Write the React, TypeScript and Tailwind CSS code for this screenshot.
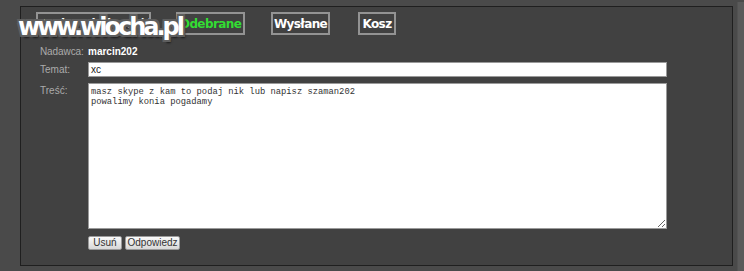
import React from "react";

const tabs = [
  { label: "Napisz wiadomość", w: "w-[115px]", active: false },
  { label: "Odebrane", w: "w-[69px]", active: true },
  { label: "Wysłane", w: "w-[59px]", active: false },
  { label: "Kosz", w: "w-[38px]", active: false },
];

export default function App() {
  return (
    <div className="relative flex h-[271px] w-[744px] overflow-hidden bg-[#4a4a4a] font-['Liberation_Sans',Arial,sans-serif]">
      {/* panel */}
      <div className="ml-[20px] mt-[6px] h-[260px] w-[713px] border border-[#1f1f1f] bg-[#414141]">
        {/* zakładki */}
        <div className="flex items-start pl-[15px] pt-[5px]">
          {tabs.map((t, i) => (
            <div
              key={t.label}
              className={`flex h-[23px] ${t.w} items-center justify-center overflow-hidden whitespace-nowrap border-2 border-[#939393] font-['DejaVu_Sans',Verdana,sans-serif] text-[12px] font-bold tracking-[-0.6px] ${
                t.active ? "text-[#33dd33]" : "text-white"
              } ${i === 0 ? "mr-[25px]" : i === 1 ? "mr-[26px]" : "mr-[28px]"}`}
            >
              {t.label}
            </div>
          ))}
        </div>

        {/* formularz */}
        <div className="mt-[10px] grid grid-cols-[48px_579px] pl-[19px] text-[10px]">
          <div className="h-[14px] leading-[14px] tracking-[-0.1px] text-[#ababab]">Nadawca:</div>
          <div className="h-[14px] leading-[14px] font-bold text-white">marcin202</div>

          <div className="mt-[3px] leading-[15px] text-[#ababab]">Temat:</div>
          <div className="mt-[3px] h-[15px] border border-[#9a9a9a] bg-white pl-[2px] text-[10px] leading-[13px] text-[#222]">xc</div>

          <div className="mt-[6px] pt-[1px] leading-[14px] text-[#ababab]">Treść:</div>
          <textarea
            readOnly
            defaultValue={"masz skype z kam to podaj nik lub napisz szaman202\npowalimy konia pogadamy"}
            className="mt-[6px] h-[146px] w-[579px] border border-[#9a9a9a] bg-white px-[2px] pt-[3px] font-['Liberation_Mono','Courier_New',monospace] text-[8.8px] leading-[10px] text-[#333] outline-none"
          />

          <div />
          <div className="mt-[7px] flex gap-[3px]">
            <button className="h-[14px] w-[34px] rounded-[2px] border border-[#9a9a9a] bg-gradient-to-b from-[#fafafa] to-[#d8d8d8] text-[10px] leading-[12px] text-[#333]">
              Usuń
            </button>
            <button className="h-[14px] w-[55px] rounded-[2px] border border-[#9a9a9a] bg-gradient-to-b from-[#fafafa] to-[#d8d8d8] text-[10px] leading-[12px] text-[#333]">
              Odpowiedz
            </button>
          </div>
        </div>
      </div>

      {/* prawy pasek */}
      <div className="ml-[4px] mt-[2px] h-full w-[7px] border-l border-[#525252] bg-[#5a5a5a]" />

      {/* znak wodny */}
      <div className="absolute left-[18px] top-[9px] font-['DejaVu_Sans',Verdana,sans-serif] text-[24px] font-bold tracking-[-3px] text-white [text-shadow:-2px_-2px_0_#5e5e5e,2px_-2px_0_#5e5e5e,-2px_2px_0_#5e5e5e,2px_2px_0_#5e5e5e,0_-2px_0_#5e5e5e,0_2px_0_#5e5e5e,-2px_0_0_#5e5e5e,2px_0_0_#5e5e5e,2px_3px_2px_#1a1a1a]">
        www.wiocha.pl
      </div>
    </div>
  );
}
